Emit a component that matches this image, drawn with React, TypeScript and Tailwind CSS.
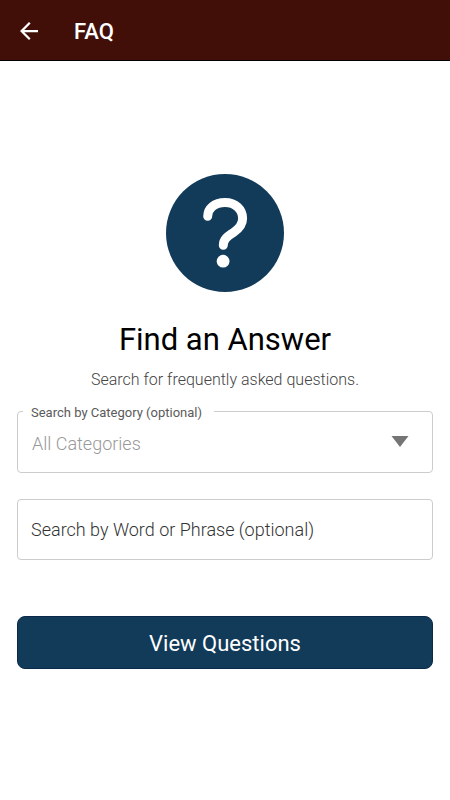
import React, { useState } from 'react';

const QuestionBadge: React.FC = () => (
  <svg viewBox="0 0 118 118" className="w-[118px] h-[118px]" fill="none" aria-hidden="true">
    <circle cx="59" cy="59" r="59" fill="#123a59" />
    <path
      d="M41.7 42.3C41.7 34.5 48.5 28.5 59 28.5C69.5 28.5 76.6 35.5 76.6 44.5C76.6 51 73 54.8 67.5 58.4C61 62.5 57.3 65.5 57.3 71.2"
      stroke="#fff"
      strokeWidth="9"
      strokeLinecap="round"
    />
    <circle cx="57.1" cy="87.2" r="6.4" fill="#fff" />
  </svg>
);

export default function App() {
  const [category, setCategory] = useState('');
  const [phrase, setPhrase] = useState('');

  return (
    <div className="min-h-screen bg-white font-['Roboto',sans-serif] text-black">
      <header className="flex h-[61px] items-center gap-9 border-b border-black bg-[#410f08] px-5 pt-0.5 text-white">
        <button type="button" aria-label="Back">
          <svg viewBox="4 4 16 16" className="h-[18px] w-[18px]" fill="currentColor">
            <path d="M20 11H7.83l5.59-5.59L12 4l-8 8 8 8 1.41-1.41L7.83 13H20v-2z" />
          </svg>
        </button>
        <h1 className="text-[22px] font-medium">FAQ</h1>
      </header>

      <main className="flex flex-col items-center px-[17px] pt-[113px]">
        <QuestionBadge />
        <h2 className="mt-7 text-[31px] leading-10">Find an Answer</h2>
        <p className="mt-2 text-[16px] leading-6 font-light text-[#444]">
          Search for frequently asked questions.
        </p>

        <form className="w-full" onSubmit={(e) => e.preventDefault()}>
          <fieldset className="mt-[9px] h-[72px] rounded border border-[#ccc] px-[5px]">
            <legend className="pt-1 pr-3 pl-2 text-[13px] leading-4 text-[#5a5a5a]">
              <label htmlFor="category">Search by Category (optional)</label>
            </legend>
            <div className="flex items-center pr-[18px] pl-[9px]">
              <select
                id="category"
                value={category}
                onChange={(e) => setCategory(e.target.value)}
                className="h-10 flex-1 appearance-none bg-transparent pt-1 text-[18px] font-light text-[#999] outline-none"
              >
                <option value="">All Categories</option>
              </select>
              <svg viewBox="0 0 18 11" className="h-[11px] w-[18px]" aria-hidden="true">
                <path d="M0.5 0H17.5L9 11Z" fill="#757575" />
              </svg>
            </div>
          </fieldset>

          <input
            type="text"
            aria-label="Search by Word or Phrase (optional)"
            placeholder="Search by Word or Phrase (optional)"
            value={phrase}
            onChange={(e) => setPhrase(e.target.value)}
            className="mt-[26px] h-[61px] w-full rounded border border-[#ccc] px-[13px] text-[18px] font-light outline-none placeholder:text-[#333]"
          />

          <button
            type="submit"
            className="mt-14 h-[53px] w-full rounded-lg border border-[#0b2a4a] bg-[#123a59] pt-0.5 text-[22px] text-white"
          >
            View Questions
          </button>
        </form>
      </main>
    </div>
  );
}
